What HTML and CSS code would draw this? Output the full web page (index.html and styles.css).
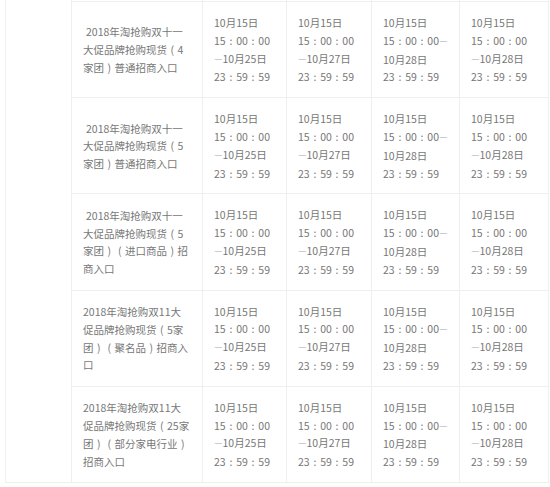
FILE: index.html
```html
<!DOCTYPE html>
<html lang="zh-CN">
<head>
<meta charset="utf-8">
<title>招商入口</title>
<link rel="stylesheet" href="styles.css">
</head>
<body>
<div class="wrap">
<table class="grid">
<colgroup>
<col class="c-side"><col class="c-name"><col class="c-d1"><col class="c-d2"><col class="c-d3"><col class="c-d4">
</colgroup>
<tbody>
<tr class="stub">
<td class="side" rowspan="6"></td>
<td></td><td></td><td></td><td></td><td></td>
</tr>
<tr>
<td class="name indent">2018年淘抢购双十一<br>大促品牌抢购现货<span class="p">(</span>4<br>家团<span class="p">)</span>普通招商入口</td>
<td class="date">10月15日<br>15<span class="p">:</span>00<span class="p">:</span>00<br><span class="dash">—</span>10月25日<br>23<span class="p">:</span>59<span class="p">:</span>59</td>
<td class="date">10月15日<br>15<span class="p">:</span>00<span class="p">:</span>00<br><span class="dash">—</span>10月27日<br>23<span class="p">:</span>59<span class="p">:</span>59</td>
<td class="date">10月15日<br>15<span class="p">:</span>00<span class="p">:</span>00<span class="dash">—</span><br>10月28日<br>23<span class="p">:</span>59<span class="p">:</span>59</td>
<td class="date">10月15日<br>15<span class="p">:</span>00<span class="p">:</span>00<br><span class="dash">—</span>10月28日<br>23<span class="p">:</span>59<span class="p">:</span>59</td>
</tr>
<tr>
<td class="name indent">2018年淘抢购双十一<br>大促品牌抢购现货<span class="p">(</span>5<br>家团<span class="p">)</span>普通招商入口</td>
<td class="date">10月15日<br>15<span class="p">:</span>00<span class="p">:</span>00<br><span class="dash">—</span>10月25日<br>23<span class="p">:</span>59<span class="p">:</span>59</td>
<td class="date">10月15日<br>15<span class="p">:</span>00<span class="p">:</span>00<br><span class="dash">—</span>10月27日<br>23<span class="p">:</span>59<span class="p">:</span>59</td>
<td class="date">10月15日<br>15<span class="p">:</span>00<span class="p">:</span>00<span class="dash">—</span><br>10月28日<br>23<span class="p">:</span>59<span class="p">:</span>59</td>
<td class="date">10月15日<br>15<span class="p">:</span>00<span class="p">:</span>00<br><span class="dash">—</span>10月28日<br>23<span class="p">:</span>59<span class="p">:</span>59</td>
</tr>
<tr>
<td class="name indent">2018年淘抢购双十一<br>大促品牌抢购现货<span class="p">(</span>5<br>家团<span class="p">)</span><span class="p">(</span>进口商品<span class="p">)</span>招<br>商入口</td>
<td class="date">10月15日<br>15<span class="p">:</span>00<span class="p">:</span>00<br><span class="dash">—</span>10月25日<br>23<span class="p">:</span>59<span class="p">:</span>59</td>
<td class="date">10月15日<br>15<span class="p">:</span>00<span class="p">:</span>00<br><span class="dash">—</span>10月27日<br>23<span class="p">:</span>59<span class="p">:</span>59</td>
<td class="date">10月15日<br>15<span class="p">:</span>00<span class="p">:</span>00<span class="dash">—</span><br>10月28日<br>23<span class="p">:</span>59<span class="p">:</span>59</td>
<td class="date">10月15日<br>15<span class="p">:</span>00<span class="p">:</span>00<br><span class="dash">—</span>10月28日<br>23<span class="p">:</span>59<span class="p">:</span>59</td>
</tr>
<tr>
<td class="name">2018年淘抢购双11大<br>促品牌抢购现货<span class="p">(</span>5家<br>团<span class="p">)</span><span class="p">(</span>聚名品<span class="p">)</span>招商入<br>口</td>
<td class="date">10月15日<br>15<span class="p">:</span>00<span class="p">:</span>00<br><span class="dash">—</span>10月25日<br>23<span class="p">:</span>59<span class="p">:</span>59</td>
<td class="date">10月15日<br>15<span class="p">:</span>00<span class="p">:</span>00<br><span class="dash">—</span>10月27日<br>23<span class="p">:</span>59<span class="p">:</span>59</td>
<td class="date">10月15日<br>15<span class="p">:</span>00<span class="p">:</span>00<span class="dash">—</span><br>10月28日<br>23<span class="p">:</span>59<span class="p">:</span>59</td>
<td class="date">10月15日<br>15<span class="p">:</span>00<span class="p">:</span>00<br><span class="dash">—</span>10月28日<br>23<span class="p">:</span>59<span class="p">:</span>59</td>
</tr>
<tr>
<td class="name">2018年淘抢购双11大<br>促品牌抢购现货<span class="p">(</span>25家<br>团<span class="p">)</span><span class="p">(</span>部分家电行业<span class="p">)</span><br>招商入口</td>
<td class="date">10月15日<br>15<span class="p">:</span>00<span class="p">:</span>00<br><span class="dash">—</span>10月25日<br>23<span class="p">:</span>59<span class="p">:</span>59</td>
<td class="date">10月15日<br>15<span class="p">:</span>00<span class="p">:</span>00<br><span class="dash">—</span>10月27日<br>23<span class="p">:</span>59<span class="p">:</span>59</td>
<td class="date">10月15日<br>15<span class="p">:</span>00<span class="p">:</span>00<span class="dash">—</span><br>10月28日<br>23<span class="p">:</span>59<span class="p">:</span>59</td>
<td class="date">10月15日<br>15<span class="p">:</span>00<span class="p">:</span>00<br><span class="dash">—</span>10月28日<br>23<span class="p">:</span>59<span class="p">:</span>59</td>
</tr>
</tbody>
</table>
</div>
</body>
</html>
```
FILE: styles.css
```css
html, body {
  margin: 0;
  padding: 0;
  background: #ffffff;
}
.wrap {
  padding-left: 5px;
}
.grid {
  border-collapse: collapse;
  table-layout: fixed;
  width: 543px;
  font-family: "Noto Sans CJK SC", "Noto Sans", sans-serif;
  font-size: 10.5px;
  line-height: 17.8px;
  color: #777777;
}
.c-side { width: 66px; }
.c-name { width: 131px; }
.c-d1 { width: 84px; }
.c-d2 { width: 85px; }
.c-d3 { width: 88px; }
.c-d4 { width: 89px; }
.grid td {
  border: 1px solid #efefef;
  padding: 12px 10px 11px 10px;
  vertical-align: middle;
  white-space: nowrap;
  overflow: hidden;
}
.grid tr.stub td {
  border-top: none;
  padding: 0;
  height: 1px;
  font-size: 0;
  line-height: 0;
}
.grid td.side {
  border-top: none;
  padding: 0;
}
.grid td.name {
  padding-left: 11px;
  padding-right: 8px;
}
.grid td.indent {
  text-indent: 3px;
}
.grid td.date {
  padding-left: 11px;
  padding-right: 4px;
}
.p {
  display: inline-block;
  width: 1em;
  text-align: center;
  text-indent: 0;
}
.dash {
  font-size: 8.5px;
}
```
